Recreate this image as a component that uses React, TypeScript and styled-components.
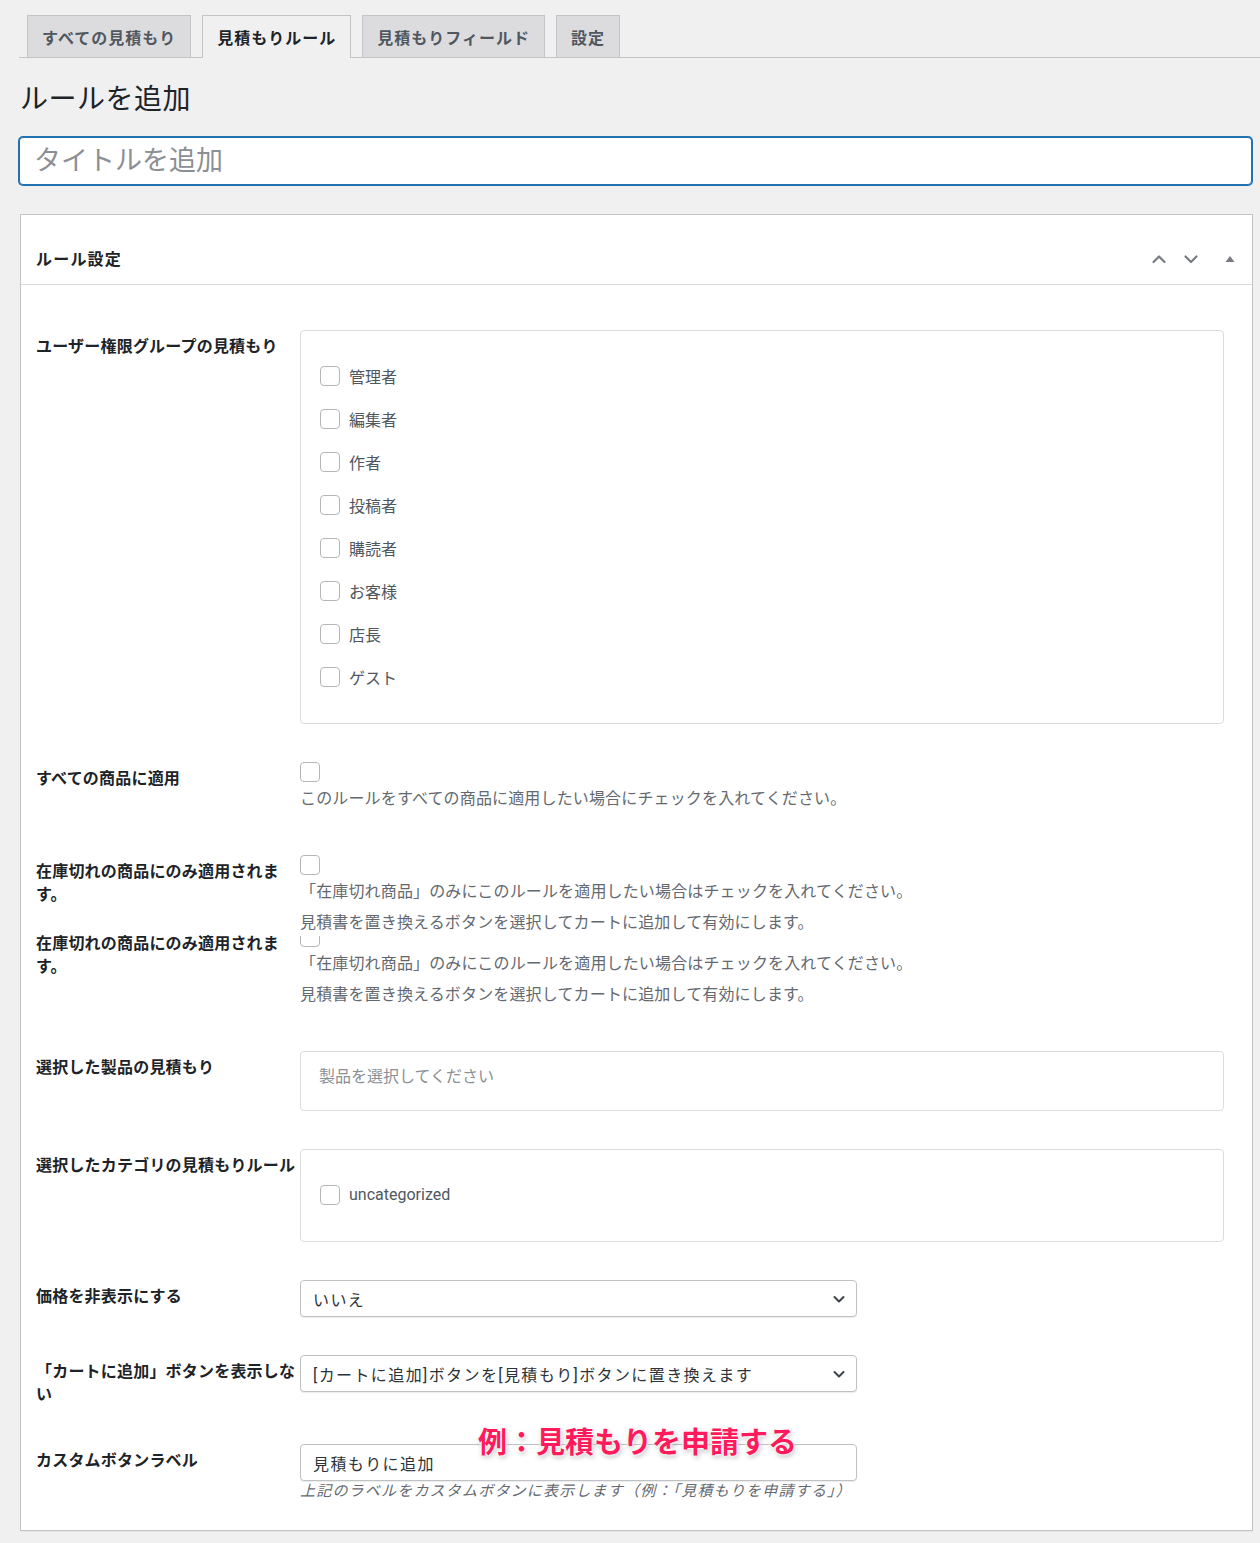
import React from "react";
import styled, { createGlobalStyle } from "styled-components";

const GlobalStyle = createGlobalStyle`
    body {
        margin: 0;
        background: #f0f0f1;
        font-family: Roboto, "Noto Sans CJK JP", sans-serif;
        color: #3c434a;
    }
    * {
        box-sizing: border-box;
    }
`;

const Page = styled.div`
    padding: 15px 7px 13px 19px;
`;

const TabBar = styled.nav`
    display: flex;
    gap: 11px;
    padding-left: 8px;
    margin-right: -7px;
    border-bottom: 1px solid #c3c4c7;
`;

const Tab = styled.div<{ $active?: boolean }>`
    display: flex;
    align-items: center;
    height: ${(p) => (p.$active ? "43px" : "42px")};
    margin-bottom: ${(p) => (p.$active ? "-1px" : "0")};
    padding: 0 14px;
    border: 1px solid #c3c4c7;
    border-bottom: none;
    background: ${(p) => (p.$active ? "#f0f0f1" : "#dcdcde")};
    color: ${(p) => (p.$active ? "#1d2327" : "#50575e")};
    font-size: 16px;
    font-weight: 700;
    letter-spacing: 1px;
`;

const Heading = styled.h1`
    margin: 24px 0 19px 1px;
    font-size: 28px;
    font-weight: 400;
    line-height: 36px;
    letter-spacing: 0.5px;
    color: #1d2327;
`;

const TitleInput = styled.input`
    display: block;
    width: calc(100% - 1px);
    height: 48px;
    padding: 0 14px;
    border: 1px solid #2271b1;
    box-shadow: 0 0 0 1px #2271b1;
    border-radius: 4px;
    background: #fff;
    font-family: inherit;
    font-size: 27px;
    color: #2c3338;
    outline: none;

    &::placeholder {
        color: #8c8f94;
    }
`;

const Panel = styled.section`
    margin: 29px 0 0 1px;
    background: #fff;
    border: 1px solid #c3c4c7;
    box-shadow: 0 1px 1px rgba(0, 0, 0, 0.04);
`;

const PanelHeader = styled.header`
    display: flex;
    align-items: flex-end;
    justify-content: space-between;
    height: 70px;
    padding: 0 14px 13px 15px;
    border-bottom: 1px solid #dcdcde;
`;

const PanelTitle = styled.h2`
    margin: 0;
    font-size: 16px;
    font-weight: 700;
    line-height: 22px;
    letter-spacing: 1.2px;
    color: #1d2327;
`;

const HeaderIcons = styled.div`
    display: flex;
    align-items: center;
    height: 24px;
`;

const IconButton = styled.span<{ $gap?: number }>`
    display: flex;
    align-items: center;
    justify-content: center;
    width: 16px;
    height: 16px;
    margin-left: ${(p) => p.$gap ?? 0}px;
    color: #787c82;
`;

const PanelBody = styled.div`
    display: flex;
    flex-direction: column;
    gap: 38px;
    padding: 45px 28px 29px 15px;
`;

const Row = styled.div<{ $overlap?: boolean }>`
    display: grid;
    grid-template-columns: 264px 1fr;
    align-items: start;
    margin-top: ${(p) => (p.$overlap ? "-52px" : "0")};
`;

const Label = styled.div`
    padding-top: 5px;
    font-size: 16px;
    font-weight: 700;
    line-height: 23px;
    letter-spacing: 0.2px;
    color: #1d2327;
`;

const Field = styled.div`
    position: relative;
    min-width: 0;
`;

const Box = styled.div`
    border: 1px solid #dcdcde;
    border-radius: 4px;
    background: #fff;
`;

const CheckList = styled(Box)`
    padding: 23px 18px 25px 19px;
`;

const CheckItem = styled.label`
    display: flex;
    align-items: center;
    gap: 9px;
    height: 43px;
    font-size: 16px;
    color: #50575e;
`;

const Checkbox = styled.span<{ $clipped?: boolean; $spaced?: boolean }>`
    display: block;
    flex: none;
    width: 20px;
    height: 20px;
    margin-bottom: ${(p) => (p.$spaced ? "1px" : "0")};
    border: 1px solid #b4b7ba;
    border-radius: 4px;
    background: #fff;
    clip-path: ${(p) => (p.$clipped ? "inset(9px 0 0 0)" : "none")};
`;

const Desc = styled.div`
    padding-bottom: 3px;
`;

const DescLine = styled.p`
    margin: 0;
    font-size: 16px;
    line-height: 31px;
    letter-spacing: 0.15px;
    color: #646970;
    white-space: nowrap;
`;

const ProductBox = styled(Box)`
    height: 60px;
    padding: 14px 18px;
    font-size: 16px;
    line-height: 22px;
    color: #8c8f94;
`;

const SelectBox = styled.div`
    display: flex;
    align-items: center;
    justify-content: space-between;
    width: 557px;
    height: 37px;
    padding: 0 10px 0 12px;
    border: 1px solid #bfc2c5;
    border-radius: 4px;
    box-shadow: 0 1px 1px rgba(0, 0, 0, 0.08);
    background: #fff;
    font-size: 16px;
    letter-spacing: 1.4px;
    color: #2c3338;
`;

const TextBox = styled(SelectBox)`
    justify-content: flex-start;
`;

const Hint = styled.p`
    margin: 0;
    font-size: 15px;
    line-height: 20px;
    letter-spacing: 1.2px;
    font-style: italic;
    color: #646970;
`;

const Annotation = styled.span`
    position: absolute;
    left: 178px;
    top: -19px;
    font-size: 29px;
    font-weight: 700;
    line-height: 36px;
    color: #ff1a5c;
    white-space: nowrap;
    text-shadow: 0 0 2px #fff, 0 0 3px #fff, 0 0 4px #fff, 1px 2px 5px rgba(0, 0, 0, 0.35);
`;

const Chevron = ({ up }: { up?: boolean }) => (
    <svg width="16" height="16" viewBox="0 0 16 16" fill="none">
        <path
            d={up ? "M2.5 11 L8 5.5 L13.5 11" : "M2.5 5.5 L8 11 L13.5 5.5"}
            stroke="currentColor"
            strokeWidth="2.2"
            strokeLinecap="round"
            strokeLinejoin="round"
        />
    </svg>
);

const SortArrow = () => (
    <svg width="16" height="16" viewBox="0 0 16 16">
        <path d="M3.5 11 L8 5 L12.5 11 Z" fill="currentColor" />
    </svg>
);

const SelectArrow = () => (
    <svg width="14" height="14" viewBox="0 0 14 14" fill="none">
        <path d="M2.5 5 L7 9.5 L11.5 5" stroke="#3c434a" strokeWidth="2" strokeLinecap="round" strokeLinejoin="round" />
    </svg>
);

const roles = ["管理者", "編集者", "作者", "投稿者", "購読者", "お客様", "店長", "ゲスト"];

const outOfStock = [
    "「在庫切れ商品」のみにこのルールを適用したい場合はチェックを入れてください。",
    "見積書を置き換えるボタンを選択してカートに追加して有効にします。",
];

export default function App() {
    return (
        <Page>
            <GlobalStyle />
            <TabBar>
                <Tab>すべての見積もり</Tab>
                <Tab $active>見積もりルール</Tab>
                <Tab>見積もりフィールド</Tab>
                <Tab>設定</Tab>
            </TabBar>

            <Heading>ルールを追加</Heading>
            <TitleInput placeholder="タイトルを追加" />

            <Panel>
                <PanelHeader>
                    <PanelTitle>ルール設定</PanelTitle>
                    <HeaderIcons>
                        <IconButton>
                            <Chevron up />
                        </IconButton>
                        <IconButton $gap={16}>
                            <Chevron />
                        </IconButton>
                        <IconButton $gap={23}>
                            <SortArrow />
                        </IconButton>
                    </HeaderIcons>
                </PanelHeader>

                <PanelBody>
                    <Row>
                        <Label>ユーザー権限グループの見積もり</Label>
                        <Field>
                            <CheckList>
                                {roles.map((role) => (
                                    <CheckItem key={role}>
                                        <Checkbox />
                                        {role}
                                    </CheckItem>
                                ))}
                            </CheckList>
                        </Field>
                    </Row>

                    <Row>
                        <Label>すべての商品に適用</Label>
                        <Field>
                            <Checkbox $spaced />
                            <Desc>
                                <DescLine>このルールをすべての商品に適用したい場合にチェックを入れてください。</DescLine>
                            </Desc>
                        </Field>
                    </Row>

                    <Row>
                        <Label>在庫切れの商品にのみ適用されます。</Label>
                        <Field>
                            <Checkbox $spaced />
                            <Desc>
                                {outOfStock.map((line) => (
                                    <DescLine key={line}>{line}</DescLine>
                                ))}
                            </Desc>
                        </Field>
                    </Row>

                    <Row $overlap>
                        <Label>在庫切れの商品にのみ適用されます。</Label>
                        <Field>
                            <Checkbox $spaced $clipped />
                            <Desc>
                                {outOfStock.map((line) => (
                                    <DescLine key={line}>{line}</DescLine>
                                ))}
                            </Desc>
                        </Field>
                    </Row>

                    <Row>
                        <Label>選択した製品の見積もり</Label>
                        <Field>
                            <ProductBox>製品を選択してください</ProductBox>
                        </Field>
                    </Row>

                    <Row>
                        <Label>選択したカテゴリの見積もりルール</Label>
                        <Field>
                            <CheckList>
                                <CheckItem>
                                    <Checkbox />
                                    uncategorized
                                </CheckItem>
                            </CheckList>
                        </Field>
                    </Row>

                    <Row>
                        <Label>価格を非表示にする</Label>
                        <Field>
                            <SelectBox>
                                いいえ
                                <SelectArrow />
                            </SelectBox>
                        </Field>
                    </Row>

                    <Row>
                        <Label>「カートに追加」ボタンを表示しない</Label>
                        <Field>
                            <SelectBox>
                                [カートに追加]ボタンを[見積もり]ボタンに置き換えます
                                <SelectArrow />
                            </SelectBox>
                        </Field>
                    </Row>

                    <Row>
                        <Label>カスタムボタンラベル</Label>
                        <Field>
                            <TextBox>見積もりに追加</TextBox>
                            <Hint>上記のラベルをカスタムボタンに表示します（例：「見積もりを申請する」）</Hint>
                            <Annotation>例：見積もりを申請する</Annotation>
                        </Field>
                    </Row>
                </PanelBody>
            </Panel>
        </Page>
    );
}
